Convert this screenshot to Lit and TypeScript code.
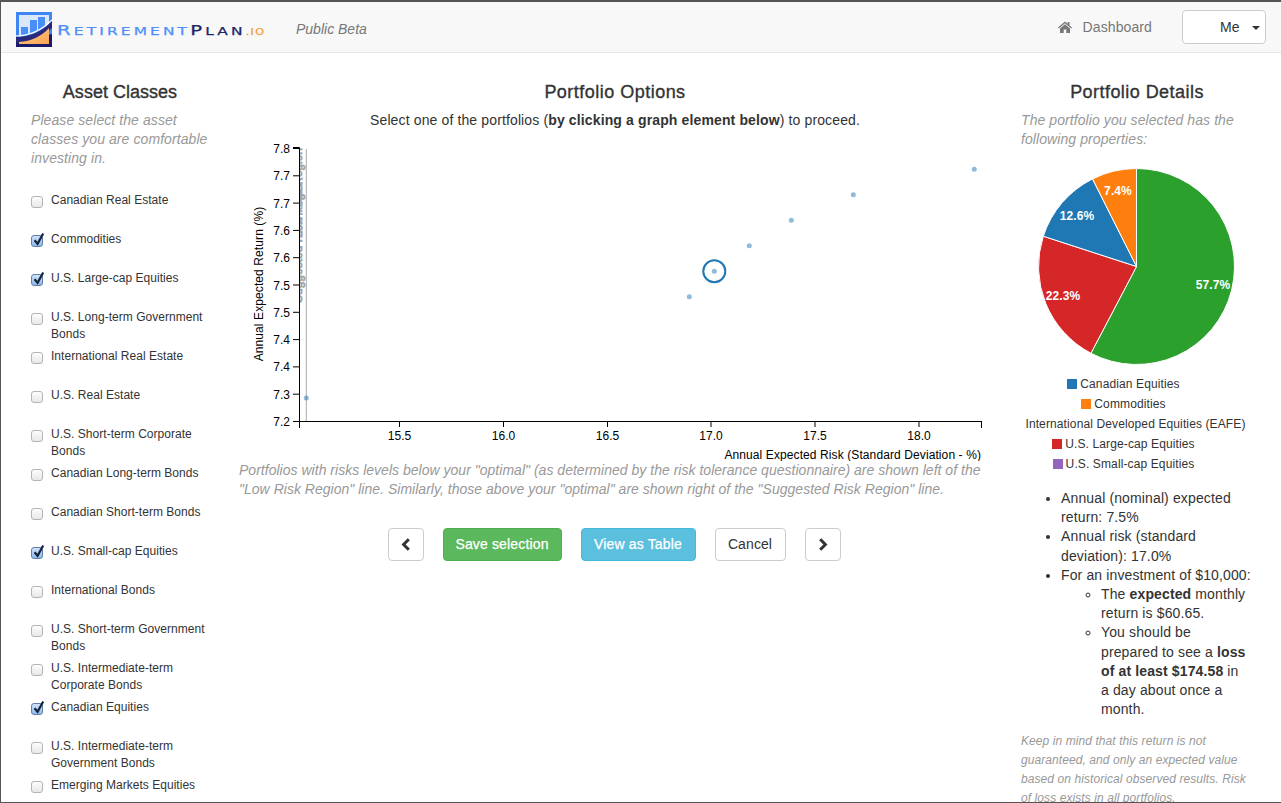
import { LitElement, html, svg, css } from "lit";
import { customElement } from "lit/decorators.js";

const ASSETS: [string, boolean][] = [
  ["Canadian Real Estate", false],
  ["Commodities", true],
  ["U.S. Large-cap Equities", true],
  ["U.S. Long-term Government Bonds", false],
  ["International Real Estate", false],
  ["U.S. Real Estate", false],
  ["U.S. Short-term Corporate Bonds", false],
  ["Canadian Long-term Bonds", false],
  ["Canadian Short-term Bonds", false],
  ["U.S. Small-cap Equities", true],
  ["International Bonds", false],
  ["U.S. Short-term Government Bonds", false],
  ["U.S. Intermediate-term Corporate Bonds", false],
  ["Canadian Equities", true],
  ["U.S. Intermediate-term Government Bonds", false],
  ["Emerging Markets Equities", false],
];

const Y_TICKS: [string, number][] = [
  ["7.8", 148], ["7.7", 175.3], ["7.7", 202.6], ["7.6", 229.9], ["7.6", 257.2], ["7.5", 284.5],
  ["7.5", 311.8], ["7.4", 339.1], ["7.4", 366.4], ["7.3", 393.7], ["7.2", 421],
];
const X_TICKS: [string, number][] = [
  ["15.5", 399.5], ["16.0", 503.5], ["16.5", 607.5], ["17.0", 711], ["17.5", 815], ["18.0", 919],
];
const DOTS = [
  [306.3, 398], [689.3, 296.7], [714.3, 271.3], [749.3, 245.7], [791.3, 220.3], [853.3, 194.7], [974.3, 169.3],
];

// clockwise from 12 o'clock
const SLICES: [number, string][] = [
  [57.7, "#2ca02c"],
  [22.3, "#d62728"],
  [12.6, "#1f77b4"],
  [7.4, "#ff7f0e"],
];
const SLICE_LABELS: [string, number, number][] = [
  ["57.7%", 1213, 285],
  ["22.3%", 1063, 296],
  ["12.6%", 1077, 216],
  ["7.4%", 1118, 191],
];
const LEGEND: [string, string | null][] = [
  ["Canadian Equities", "#1f77b4"],
  ["Commodities", "#ff7f0e"],
  ["International Developed Equities (EAFE)", null],
  ["U.S. Large-cap Equities", "#d62728"],
  ["U.S. Small-cap Equities", "#9467bd"],
];

function slicePaths() {
  const cx = 117.5, cy = 98.5, r = 98;
  let a = 0;
  return SLICES.map(([pct, color]) => {
    const start = a;
    a += (pct / 100) * Math.PI * 2;
    const x0 = cx + r * Math.sin(start), y0 = cy - r * Math.cos(start);
    const x1 = cx + r * Math.sin(a), y1 = cy - r * Math.cos(a);
    const large = a - start > Math.PI ? 1 : 0;
    return svg`<path d="M${cx} ${cy}L${x0} ${y0}A${r} ${r} 0 ${large} 1 ${x1} ${y1}Z" fill=${color} stroke="#fff" stroke-width="1"></path>`;
  });
}

@customElement("app-root")
export class AppRoot extends LitElement {
  static styles = css`
    :host {
      display: block;
      font-family: "Liberation Sans", Arial, sans-serif;
      color: #333;
      font-size: 14px;
    }
    .frame {
      box-sizing: border-box;
      height: 803px;
      overflow: hidden;
      border-top: 2px solid #555;
      border-left: 1px solid #555;
      border-bottom: 1px solid #555;
      background: #fff;
    }
    .navbar {
      box-sizing: border-box;
      height: 51px;
      display: flex;
      align-items: center;
      background: #f8f8f8;
      border-bottom: 1px solid #e7e7e7;
      padding: 0 15px;
    }
    .logo-icon {
      width: 36px;
      height: 35px;
      display: block;
      margin-top: 4px;
    }
    .wordmark {
      margin-left: 5px;
      margin-top: 6px;
      width: 214px;
      font-family: "DejaVu Sans", sans-serif;
      font-size: 11px;
      letter-spacing: 2.25px;
      white-space: nowrap;
      color: #4f8ffa;
      transform: scaleX(1.4);
      transform-origin: left center;
      -webkit-text-stroke: 0.25px currentColor;
    }
    .wordmark .cap { font-size: 14px; }
    .wordmark .plan { color: #1c2566; }
    .wordmark .tld { color: #f0a040; font-size: 8px; letter-spacing: 1px; }
    .beta {
      margin-left: 25px;
      margin-top: 3px;
      font-style: italic;
      color: #777;
    }
    .spacer { flex: 1; }
    .nav-link {
      display: flex;
      align-items: center;
      gap: 11px;
      color: #777;
      margin-right: 30px;
      letter-spacing: 0.1px;
    }
    .home { width: 14px; height: 12px; display: block; }
    .me {
      box-sizing: border-box;
      width: 84px;
      height: 34px;
      background: #fff;
      border: 1px solid #ccc;
      border-radius: 4px;
      display: flex;
      align-items: center;
      padding-left: 37px;
      padding-bottom: 1px;
      color: #333;
    }
    .caret {
      margin-left: 13px;
      margin-top: 3px;
      width: 0;
      height: 0;
      border-top: 4px solid #333;
      border-left: 4px solid transparent;
      border-right: 4px solid transparent;
    }
    .main { display: flex; }
    .left { box-sizing: border-box; width: 239px; padding: 29px 31px 0 30px; flex: none; }
    .center { box-sizing: border-box; width: 750px; padding-top: 29px; flex: none; }
    .right { box-sizing: border-box; width: 291px; padding: 29px 28px 0 31px; flex: none; }
    h2 {
      margin: 0;
      font-size: 18px;
      line-height: 20px;
      font-weight: 400;
      text-align: center;
      -webkit-text-stroke: 0.35px #333;
      letter-spacing: 0.02px;
    }
    .center h2 { letter-spacing: 0.48px; }
    .right h2 { letter-spacing: 0.45px; }
    .hint {
      margin: 9px 0 0;
      font-style: italic;
      color: #999;
      line-height: 19px;
      letter-spacing: 0.08px;
    }
    .right .hint { margin-right: 3px; }
    .assets { margin-top: 24px; }
    .asset {
      height: 39px;
      display: flex;
      align-items: flex-start;
      font-size: 12px;
      line-height: 17px;
      letter-spacing: 0.03px;
    }
    .box {
      box-sizing: border-box;
      flex: none;
      width: 12px;
      height: 12px;
      margin: 4px 8px 0 0;
      border: 1px solid #b4b4b4;
      border-radius: 3px;
      background: linear-gradient(#fdfdfd, #e8e8e8);
      position: relative;
    }
    .box.on {
      border-color: #5f7fa8;
      background: linear-gradient(#cfe2f8, #8fb8ea);
    }
    .box svg {
      position: absolute;
      left: 0;
      top: -4px;
      width: 13px;
      height: 14px;
    }
    .lead { margin: 9px 0 0; text-align: center; line-height: 19px; letter-spacing: 0.13px; }
    .chart { display: block; width: 750px; height: 327px; margin-top: 4px; }
    .chart text { font-size: 12px; fill: #000; font-family: "Liberation Sans", Arial, sans-serif; }
    .chart .axis-title { letter-spacing: 0.1px; }
    .chart .region { fill: #a4a4a4; stroke: #a4a4a4; stroke-width: 0.8px; }
    .note {
      margin: 0 0 0 -1px;
      width: 746px;
      font-style: italic;
      color: #999;
      line-height: 19px;
      letter-spacing: 0.02px;
    }
    .actions {
      display: flex;
      justify-content: center;
      gap: 19px;
      margin: 29px 2px 0 0;
    }
    .btn {
      box-sizing: border-box;
      height: 33px;
      border: 1px solid #ccc;
      border-radius: 4px;
      background: #fff;
      color: #333;
      font: 14px "Liberation Sans", Arial, sans-serif;
      padding: 0 0 1px;
      display: flex;
      align-items: center;
      justify-content: center;
    }
    .btn.icon { width: 36px; padding: 0; }
    .btn.icon svg { width: 10px; height: 13px; display: block; }
    .btn.save {
      background: #5cb85c;
      border-color: #4cae4c;
      color: #fff;
      width: 119px;
      letter-spacing: 0.15px;
      -webkit-text-stroke: 0.25px #fff;
    }
    .btn.view {
      background: #5bc0de;
      border-color: #46b8da;
      color: #fff;
      width: 115px;
      letter-spacing: 0.15px;
      -webkit-text-stroke: 0.25px #fff;
    }
    .btn.cancel { width: 71px; letter-spacing: 0.1px; }
    .pie { display: block; width: 235px; height: 197px; margin: 19px 0 0 -2px; }
    .pie text { font: bold 12px "Liberation Sans", Arial, sans-serif; fill: #fff; text-anchor: middle; letter-spacing: 0.1px; }
    .legend { margin: 9px 3px 0 0; font-size: 12px; letter-spacing: 0.12px; }
    .legend-row {
      height: 20px;
      display: flex;
      align-items: center;
      justify-content: center;
      gap: 3px;
      padding-right: 24px;
      white-space: nowrap;
    }
    .legend-row.plain { padding-right: 0; }
    .swatch { width: 10px; height: 10px; flex: none; }
    ul { margin: 0; padding-left: 40px; line-height: 19.2px; letter-spacing: 0.13px; }
    ul ul { padding-right: 3px; }
    .details { margin-top: 15px; }
    .small {
      margin: 13px 3px 0 0;
      font-size: 12px;
      font-style: italic;
      color: #999;
      line-height: 19px;
      letter-spacing: 0.08px;
    }
  `;

  render() {
    return html`
      <div class="frame">
        ${this.renderNav()}
        <div class="main">
          ${this.renderAssets()}
          ${this.renderCenter()}
          ${this.renderDetails()}
        </div>
      </div>
    `;
  }

  renderNav() {
    return html`
      <div class="navbar">
        <svg class="logo-icon" viewBox="0 0 36 35">
          <defs>
            <linearGradient id="orange" x1="0" y1="0" x2="1" y2="1">
              <stop offset="0" stop-color="#ffc98a"></stop>
              <stop offset="1" stop-color="#fba552"></stop>
            </linearGradient>
          </defs>
          <rect width="36" height="35" fill="#1a1a6b"></rect>
          <path d="M0 0H36V22L2 30H0Z" fill="#3f86f5"></path>
          <path d="M3 3H33V14L3 25Z" fill="#dbe8fb"></path>
          <rect x="5" y="15" width="7" height="10" fill="#4a8ff7"></rect>
          <rect x="14" y="8" width="7" height="14" fill="#4a8ff7"></rect>
          <rect x="22" y="5" width="7" height="14" fill="#4a8ff7"></rect>
          <path d="M0 25C14 25 25 20 36 9V16C26 25 14 29 0 31Z" fill="#29297c"></path>
          <path d="M0 24C14 24 25 19 36 8" fill="none" stroke="#fff" stroke-width="1.2"></path>
          <path d="M3 32V30C15 29 25 25 33 16V32Z" fill="url(#orange)"></path>
        </svg>
        <div class="wordmark"><span class="cap">R</span>ETIREMENT<span class="plan"><span class="cap">P</span>LAN</span><span class="tld">.IO</span></div>
        <div class="beta">Public Beta</div>
        <div class="spacer"></div>
        <div class="nav-link">
          <svg class="home" viewBox="0 0 14 12">
            <path d="M7 0.5L0 6.6L0.8 7.5L7 2.2L13.2 7.5L14 6.6L11.5 4.4V1H9.7V2.8Z" fill="#777"></path>
            <path d="M7 3.3L2 7.6V12H5.7V8.6H8.3V12H12V7.6Z" fill="#777"></path>
          </svg>
          <span>Dashboard</span>
        </div>
        <div class="me">Me<span class="caret"></span></div>
      </div>
    `;
  }

  renderAssets() {
    return html`
      <div class="left">
        <h2>Asset Classes</h2>
        <p class="hint">Please select the asset classes you are comfortable investing in.</p>
        <div class="assets">
          ${ASSETS.map(
            ([name, on]) => html`
              <div class="asset">
                <span class="box ${on ? "on" : ""}">
                  ${on
                    ? html`<svg viewBox="0 0 13 14"><path d="M2.5 8.2L5.6 11.8L11.2 1.5" fill="none" stroke="#14233f" stroke-width="2.2"></path></svg>`
                    : null}
                </span>
                <span>${name}</span>
              </div>
            `
          )}
        </div>
      </div>
    `;
  }

  renderCenter() {
    return html`
      <div class="center">
        <h2>Portfolio Options</h2>
        <p class="lead">Select one of the portfolios (<b>by clicking a graph element below</b>) to proceed.</p>
        ${this.renderChart()}
        <p class="note">Portfolios with risks levels below your "optimal" (as determined by the risk tolerance questionnaire) are shown left of the "Low Risk Region" line. Similarly, those above your "optimal" are shown right of the "Suggested Risk Region" line.</p>
        <div class="actions">
          <div class="btn icon">
            <svg viewBox="0 0 10 13"><path d="M7.8 1.2L2.6 6.5L7.8 11.8" fill="none" stroke="#333" stroke-width="3"></path></svg>
          </div>
          <div class="btn save">Save selection</div>
          <div class="btn view">View as Table</div>
          <div class="btn cancel">Cancel</div>
          <div class="btn icon">
            <svg viewBox="0 0 10 13"><path d="M2.2 1.2L7.4 6.5L2.2 11.8" fill="none" stroke="#333" stroke-width="3"></path></svg>
          </div>
        </div>
      </div>
    `;
  }

  // viewBox is in page coordinates, easier to read off the plot
  renderChart() {
    return html`
      <svg class="chart" viewBox="240 134 750 327">
        <defs>
          <clipPath id="plot"><rect x="299" y="140" width="690" height="281"></rect></clipPath>
        </defs>
        <g clip-path="url(#plot)">
          <text class="region" transform="translate(302 238) rotate(-90)">Low Risk Region</text>
          <text class="region" transform="translate(302 303) rotate(-90)">Suggested Risk Region</text>
        </g>
        <line x1="306.3" y1="149" x2="306.3" y2="421" stroke="#aaa"></line>
        ${DOTS.map(([x, y]) => svg`<circle cx=${x} cy=${y} r="2.5" fill="#1f77b4" fill-opacity="0.5"></circle>`)}
        <circle cx="714.3" cy="271.3" r="11" fill="none" stroke="#1f77b4" stroke-width="2"></circle>
        <path d="M293 147.5H299.5V421.5H981.5M299.5 421V428M981.5 421V428" fill="none" stroke="#000"></path>
        ${Y_TICKS.map(
          ([label, y]) => svg`
            <line x1="293" x2="299" y1=${y + 0.5} y2=${y + 0.5} stroke="#000"></line>
            <text x="290" y=${y + 5} text-anchor="end">${label}</text>
          `
        )}
        ${X_TICKS.map(
          ([label, x]) => svg`
            <line x1=${x} x2=${x} y1="421" y2="427" stroke="#000"></line>
            <text x=${x} y="440" text-anchor="middle">${label}</text>
          `
        )}
        <text class="axis-title" transform="translate(263 284) rotate(-90)" text-anchor="middle">Annual Expected Return (%)</text>
        <text class="axis-title" x="981" y="459" text-anchor="end">Annual Expected Risk (Standard Deviation - %)</text>
      </svg>
    `;
  }

  renderDetails() {
    return html`
      <div class="right">
        <h2>Portfolio Details</h2>
        <p class="hint">The portfolio you selected has the following properties:</p>
        <svg class="pie" viewBox="0 0 235 197">
          ${slicePaths()}
          ${SLICE_LABELS.map(
            ([label, x, y]) => svg`<text x=${x - 1020 + 1} y=${y - 168 + 4}>${label}</text>`
          )}
        </svg>
        <div class="legend">
          ${LEGEND.map(
            ([name, color]) => html`
              <div class="legend-row ${color ? "" : "plain"}">
                ${color ? html`<span class="swatch" style="background:${color}"></span>` : null}
                <span>${name}</span>
              </div>
            `
          )}
        </div>
        <ul class="details">
          <li>Annual (nominal) expected return: 7.5%</li>
          <li>Annual risk (standard deviation): 17.0%</li>
          <li>
            For an investment of $10,000:
            <ul>
              <li>The <b>expected</b> monthly return is $60.65.</li>
              <li>You should be prepared to see a <b>loss of at least $174.58</b> in a day about once a month.</li>
            </ul>
          </li>
        </ul>
        <p class="small">Keep in mind that this return is not guaranteed, and only an expected value based on historical observed results. Risk of loss exists in all portfolios.</p>
      </div>
    `;
  }
}
